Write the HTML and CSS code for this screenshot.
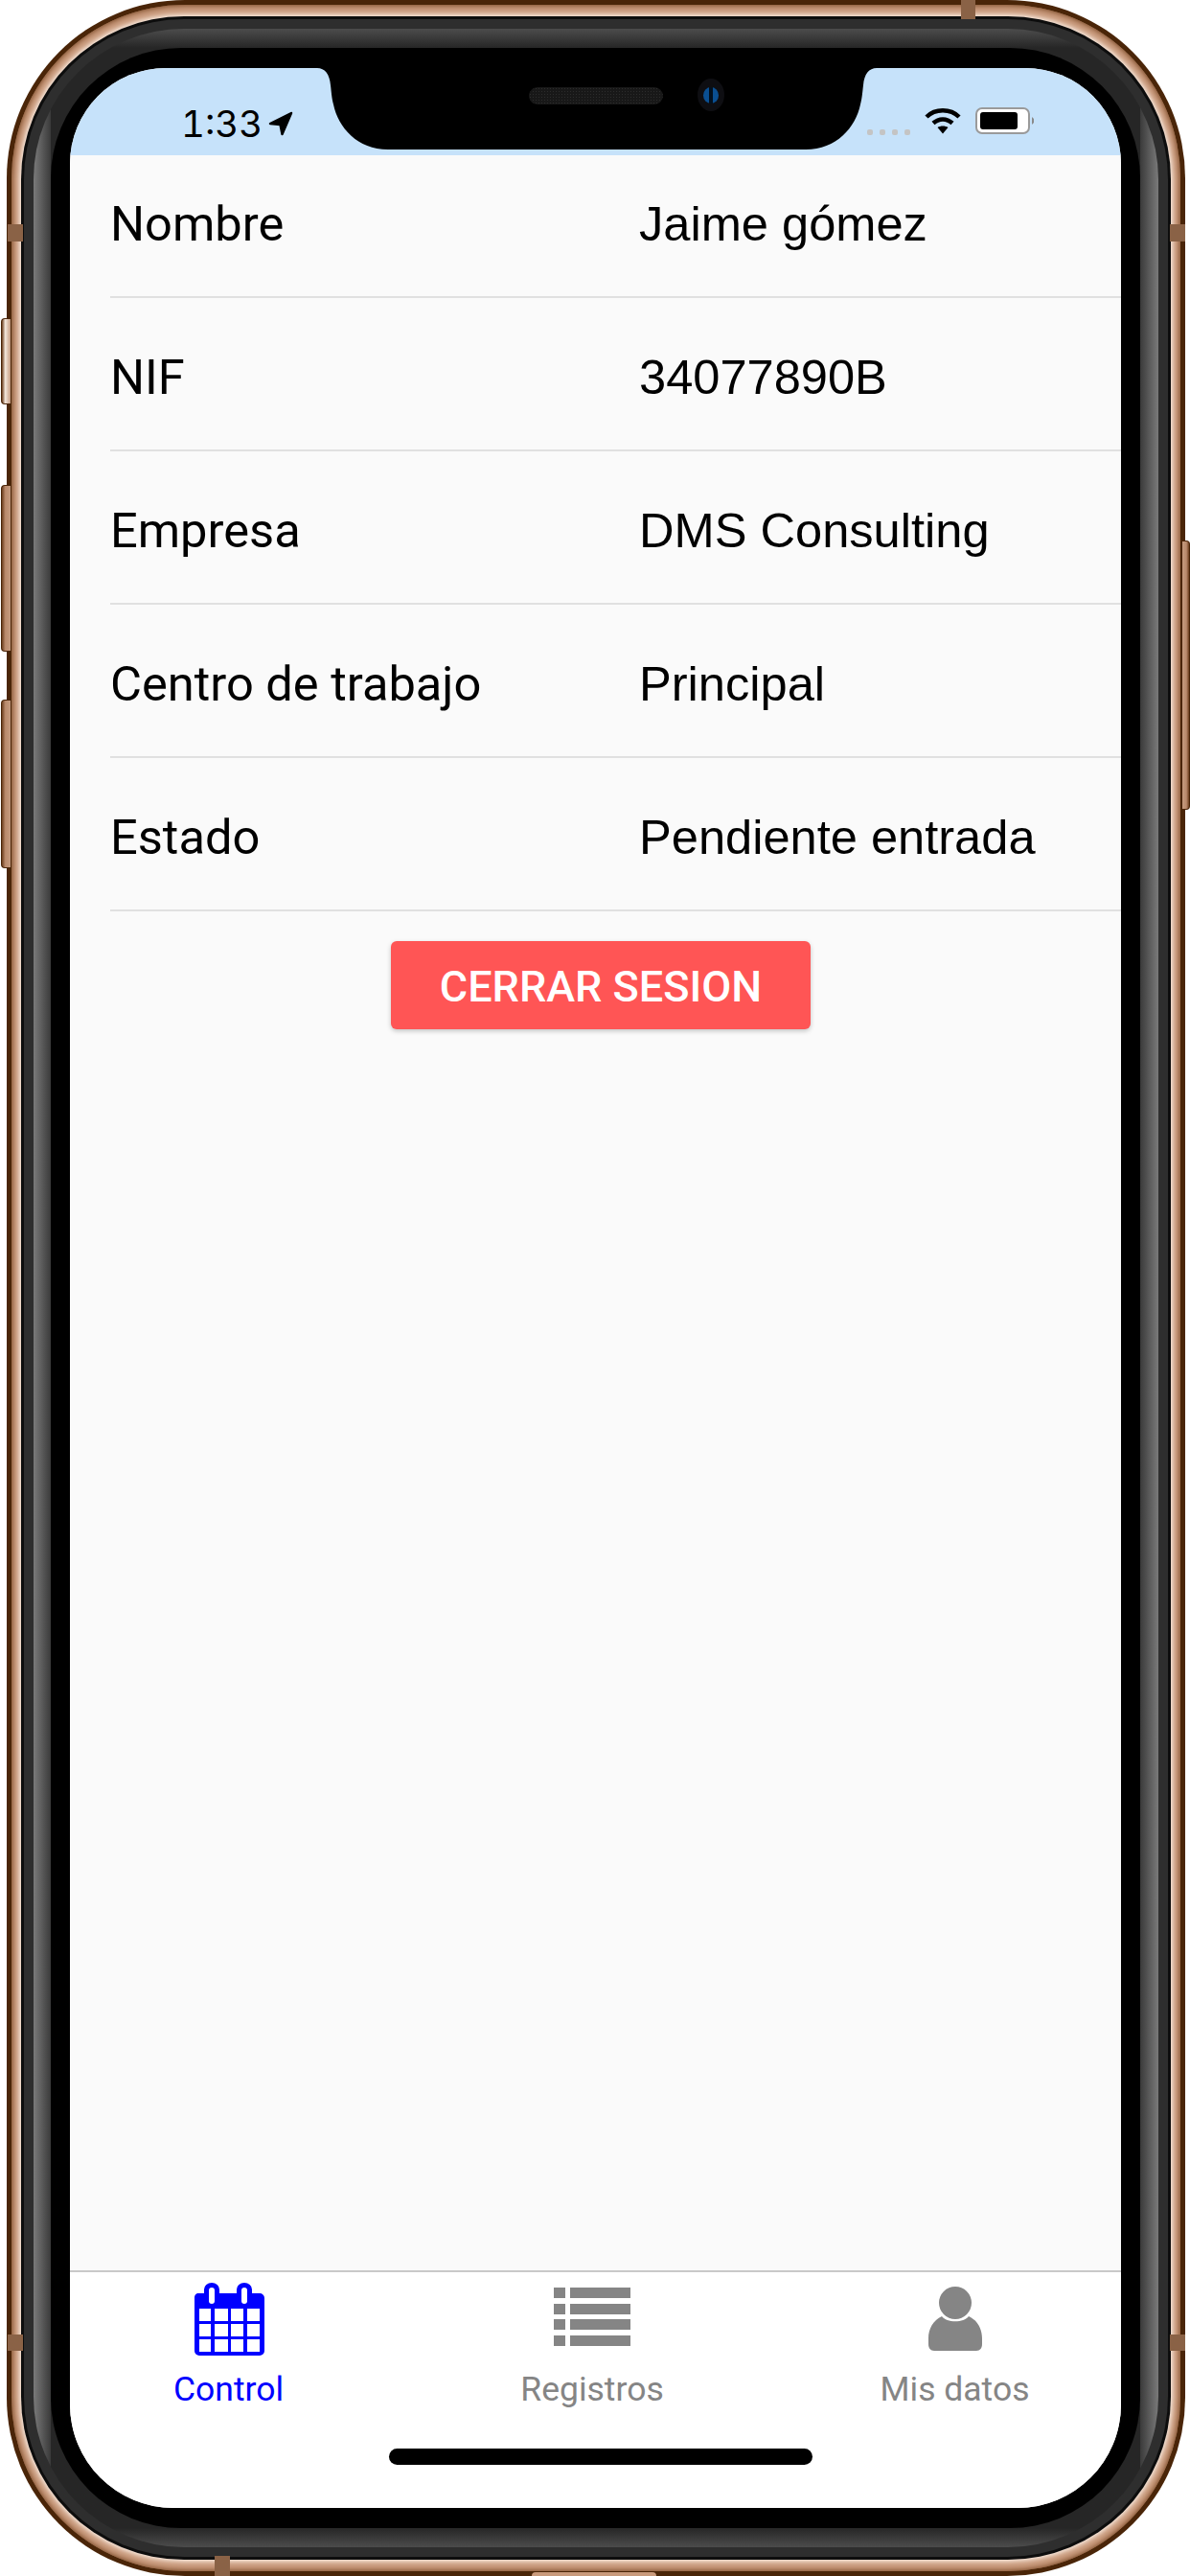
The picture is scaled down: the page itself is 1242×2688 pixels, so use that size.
FILE: index.html
```html
<!DOCTYPE html>
<html lang="es">
<head>
  <meta charset="UTF-8">
  <meta name="viewport" content="width=device-width, initial-scale=1.0">
  <title>Control de presencia</title>
  <link rel="stylesheet" href="styles.css">
</head>
<body>
  <div class="device">
    <!-- side buttons -->
    <span class="side-btn btn-mute"></span>
    <span class="side-btn btn-vol-up"></span>
    <span class="side-btn btn-vol-down"></span>
    <span class="side-btn btn-power"></span>

    <div class="frame">
      <div class="gold">
        <div class="bezel">
          <div class="rim">
            <div class="glass">
              <div class="black">
                <div class="screen">
                  <header class="status">
                    <div class="status-left">
                      <span class="clock">1:33</span>
                      <svg class="arrow" viewBox="0 0 26 26"><path d="M24 2 L2 13 L12.5 14 L14.5 24 Z" fill="#000" stroke="#000" stroke-width="2.5" stroke-linejoin="round"/></svg>
                    </div>
                    <div class="status-right">
                      <div class="signal"><i></i><i></i><i></i><i></i></div>
                      <svg class="wifi" viewBox="0 0 38 28">
                        <path d="M2 10 C11 1 27 1 36 10" fill="none" stroke="#000" stroke-width="4.5"/>
                        <path d="M9 16.5 C15 11 23 11 29 16.5" fill="none" stroke="#000" stroke-width="4.5"/>
                        <path d="M13.5 21 C16.5 19 21.5 19 24.5 21 L19 27.5 Z" fill="#000"/>
                      </svg>
                      <svg class="battery" viewBox="0 0 62 28">
                        <rect x="1" y="1" width="55" height="26" rx="6" fill="#fff" stroke="#9a9a9a" stroke-width="2"/>
                        <rect x="5" y="5" width="39" height="18" rx="3" fill="#000"/>
                        <path d="M59 10 L61 12 V16 L59 18 Z" fill="#8a8a8a"/>
                      </svg>
                    </div>
                  </header>

                  <main class="content">
                    <div class="row row-first">
                      <span class="label">Nombre</span>
                      <span class="value">Jaime gómez</span>
                    </div>
                    <div class="row">
                      <span class="label">NIF</span>
                      <span class="value">34077890B</span>
                    </div>
                    <div class="row">
                      <span class="label">Empresa</span>
                      <span class="value">DMS Consulting</span>
                    </div>
                    <div class="row">
                      <span class="label">Centro de trabajo</span>
                      <span class="value">Principal</span>
                    </div>
                    <div class="row">
                      <span class="label">Estado</span>
                      <span class="value">Pendiente entrada</span>
                    </div>
                    <button class="logout" type="button">CERRAR SESION</button>
                  </main>

                  <nav class="tabs">
                    <div class="tab tab-active">
                      <div class="tab-icon">
                        <svg width="76" height="76" viewBox="0 0 76 76">
                          <path fill="#0000ff" d="M5 11 H12 V7 A8 7 0 0 1 28 7 V11 H46 V7 A8 7 0 0 1 62 7 V11 H70 A5 5 0 0 1 75 16 V71 A5 5 0 0 1 70 76 H7 A5 5 0 0 1 2 71 V16 A5 5 0 0 1 5 11 Z"/>
                          <rect x="17" y="5" width="6" height="17" rx="3" fill="#fff"/>
                          <rect x="51" y="5" width="6" height="17" rx="3" fill="#fff"/>
                          <g fill="#fff">
                            <rect x="7" y="27" width="12" height="13"/><rect x="23" y="27" width="14" height="13"/><rect x="40" y="27" width="13" height="13"/><rect x="57" y="27" width="13" height="13"/>
                            <rect x="7" y="43" width="12" height="13"/><rect x="23" y="43" width="14" height="13"/><rect x="40" y="43" width="13" height="13"/><rect x="57" y="43" width="13" height="13"/>
                            <rect x="7" y="59" width="12" height="13"/><rect x="23" y="59" width="14" height="13"/><rect x="40" y="59" width="13" height="13"/><rect x="57" y="59" width="13" height="13"/>
                          </g>
                        </svg>
                      </div>
                      <span class="tab-label">Control</span>
                    </div>
                    <div class="tab">
                      <div class="tab-icon">
                        <svg width="82" height="76" viewBox="0 0 82 76">
                          <g fill="#858585">
                            <rect x="1" y="5" width="12" height="11"/><rect x="18" y="5" width="63" height="11"/>
                            <rect x="1" y="22" width="12" height="11"/><rect x="18" y="22" width="63" height="11"/>
                            <rect x="1" y="38" width="12" height="11"/><rect x="18" y="38" width="63" height="11"/>
                            <rect x="1" y="55" width="12" height="11"/><rect x="18" y="55" width="63" height="11"/>
                          </g>
                        </svg>
                      </div>
                      <span class="tab-label">Registros</span>
                    </div>
                    <div class="tab">
                      <div class="tab-icon">
                        <svg width="58" height="76" viewBox="0 0 58 76">
                          <circle cx="29" cy="21" r="17" fill="#858585"/>
                          <path fill="#858585" d="M15 35 C20 42 38 42 43 35 C52 39 57 48 57 58 V64 C57 68 55 71 51 71 H7 C3 71 1 68 1 64 V58 C1 48 6 39 15 35 Z"/>
                        </svg>
                      </div>
                      <span class="tab-label">Mis datos</span>
                    </div>
                    <span class="home-bar"></span>
                  </nav>

                  <!-- notch sits over the status bar -->
                  <svg class="notch" width="596" height="86" viewBox="0 0 596 86">
                    <path fill="#000" d="M0 0 H6 C14 0 19 6 20 18 C21 26 21 30 23 38 C28 62 48 85 80 85 H516 C548 85 568 62 573 38 C575 30 575 26 576 18 C577 6 582 0 590 0 H596 V-1 H0 Z"/>
                  </svg>
                  <span class="speaker"></span>
                  <span class="camera"><i></i></span>
                </div>
              </div>
            </div>
          </div>
        </div>
      </div>
    </div>

    <!-- antenna bands -->
    <span class="band band-left-top"></span>
    <span class="band band-left-bottom"></span>
    <span class="band band-right-top"></span>
    <span class="band band-right-bottom"></span>
    <span class="band band-top"></span>
    <span class="band band-bottom"></span>
    <span class="dock"></span>
  </div>
</body>
</html>
```

FILE: styles.css
```css
body {
  margin: 0;
  background-color: #ffffff;
  font-family: Roboto, "Liberation Sans", sans-serif;
  color: #000000;
}

.device {
  position: relative;
  width: 1242px;
  height: 2688px;
  overflow: hidden;
  box-sizing: border-box;
  padding-left: 7px;
  padding-right: 5px;
}

/* phone body, one nested layer per ring */
.frame {
  height: 100%;
  box-sizing: border-box;
  padding: 5px;
  border-radius: 186px;
  background: #4a2508;
  display: flex;
}

.gold {
  flex: 1;
  display: flex;
  padding: 12px 10px;
  border-radius: 181px;
  background: #c99a7c;
  box-shadow: inset 0 0 5px 1px #7a4a28;
}

.bezel {
  flex: 1;
  display: flex;
  padding: 3px;
  border-radius: 170px;
  background: #0d0d0d;
  box-shadow: 0 0 5px 2px #fbeee4;
}

.rim {
  flex: 1;
  display: flex;
  padding: 10px;
  border-radius: 167px;
  background: #2e2e2e;
}

.glass {
  flex: 1;
  display: flex;
  padding: 20px 19px 20px 18px;
  border-radius: 157px;
  background:
    linear-gradient(to right, #7a7a7a, #3a3a3a 18px, transparent 18px),
    linear-gradient(to left, #7a7a7a, #3a3a3a 19px, transparent 19px),
    linear-gradient(to bottom, #4c4c4c, #262626 20px, #262626 calc(100% - 20px), #4c4c4c);
}

.black {
  flex: 1;
  display: flex;
  padding: 21px 20px;
  border-radius: 136px;
  background: #000000;
}

.screen {
  position: relative;
  flex: 1;
  display: flex;
  flex-direction: column;
  overflow: hidden;
  border-radius: 100px 100px 108px 108px;
  background: #fafafa;
}

/* status bar */
.status {
  height: 91px;
  flex: none;
  box-sizing: border-box;
  padding: 41px 90px 0 116px;
  display: flex;
  justify-content: space-between;
  align-items: flex-start;
  background: #c6e2fa;
}

.status-left {
  display: flex;
  align-items: center;
  gap: 6px;
}

.clock {
  font-family: Inter, sans-serif;
  font-size: 38.5px;
  font-variant-numeric: tabular-nums;
  line-height: 34px;
}

.arrow {
  width: 26px;
  height: 26px;
}

.status-right {
  display: flex;
  align-items: flex-start;
  position: relative;
}

.signal {
  display: flex;
  gap: 7px;
  margin: 23px 15px 0 0;
}

.signal i {
  width: 6px;
  height: 6px;
  border-radius: 2px;
  background: #c4c4c4;
}

.wifi {
  width: 38px;
  height: 28px;
}

.battery {
  width: 62px;
  height: 28px;
  margin-left: 15px;
}

.notch {
  position: absolute;
  top: 0;
  left: 252px;
  overflow: visible;
}

.speaker {
  position: absolute;
  top: 20px;
  left: 479px;
  width: 140px;
  height: 18px;
  border-radius: 9px;
  background-color: #181818;
  background-image: radial-gradient(#2c2c2c 1px, transparent 1px);
  background-size: 3px 3px;
}

.camera {
  position: absolute;
  top: 11px;
  left: 655px;
  width: 28px;
  height: 34px;
  border-radius: 50%;
  background: #0e0e12;
  display: flex;
  align-items: center;
  justify-content: center;
}

.camera i {
  width: 16px;
  height: 17px;
  border-radius: 50%;
  background: linear-gradient(to right, #0a4f92 0 40%, #02101e 40% 60%, #0a4f92 60%);
}

/* data rows */
.content {
  flex: 1;
  background: #fafafa;
}

.row {
  height: 160px;
  box-sizing: border-box;
  margin-left: 42px;
  padding-top: 7px;
  display: flex;
  align-items: center;
  border-bottom: 2px solid #e0e0e0;
}

.row-first {
  height: 149px;
  padding-top: 0;
  padding-bottom: 4px;
}

.label {
  width: 552px;
  flex: none;
  font-size: 50.6px;
}

.value {
  font-family: "Liberation Sans", sans-serif;
  font-size: 50.6px;
}

.logout {
  display: block;
  width: 438px;
  height: 92px;
  margin: 31px 0 0 335px;
  padding: 2px 0 0;
  border: none;
  border-radius: 6px;
  background: #ff5555;
  color: #ffffff;
  font-family: Roboto, sans-serif;
  font-weight: 500;
  font-size: 45px;
  box-shadow: 0 2px 5px rgba(0, 0, 0, 0.22);
}

/* bottom tabs */
.tabs {
  position: relative;
  height: 248px;
  flex: none;
  box-sizing: border-box;
  border-top: 2px solid #c9c9c9;
  background: #ffffff;
  padding-right: 9px;
  display: grid;
  grid-template-columns: 331px 428px 329px;
}

.tab {
  display: flex;
  flex-direction: column;
  align-items: center;
  color: #858585;
}

.tab-active {
  color: #0000ff;
}

.tab-icon {
  height: 76px;
  margin-top: 11px;
  display: flex;
}

.tab-label {
  margin-top: 13px;
  font-size: 35.5px;
  line-height: 44px;
}

.home-bar {
  position: absolute;
  left: 333px;
  top: 184px;
  width: 442px;
  height: 17px;
  border-radius: 9px;
  background: #000000;
}

/* things stuck on the outside of the body */
.side-btn {
  position: absolute;
  width: 10px;
  box-sizing: border-box;
  border-radius: 4px 0 0 4px;
  border: 1px solid #4a2508;
  border-right: none;
  background: linear-gradient(to right, #6b3d1d, #b98a6c 40%, #c49a7e);
}

.btn-mute {
  left: 1px;
  top: 332px;
  height: 90px;
  background: linear-gradient(to right, #6b3d1d, #f4e7dc 40%, #c49a7e);
}

.btn-vol-up {
  left: 1px;
  top: 506px;
  height: 174px;
}

.btn-vol-down {
  left: 1px;
  top: 730px;
  height: 176px;
}

.btn-power {
  left: 1234px;
  top: 564px;
  width: 8px;
  height: 281px;
  border-radius: 0 4px 4px 0;
  border: 1px solid #4a2508;
  border-left: none;
  background: linear-gradient(to left, #6b3d1d, #b98a6c 40%, #c49a7e);
}

.band {
  position: absolute;
  background: #8a6246;
}

.band-left-top { left: 8px; top: 234px; width: 16px; height: 18px; }
.band-left-bottom { left: 8px; top: 2436px; width: 16px; height: 17px; }
.band-right-top { left: 1221px; top: 234px; width: 16px; height: 18px; }
.band-right-bottom { left: 1221px; top: 2436px; width: 16px; height: 17px; }
.band-top { left: 1003px; top: 0; width: 15px; height: 20px; }
.band-bottom { left: 224px; top: 2667px; width: 16px; height: 21px; }

.dock {
  position: absolute;
  left: 555px;
  top: 2684px;
  width: 130px;
  height: 4px;
  border-radius: 6px 6px 0 0;
  background: #c99a7c;
}
```
